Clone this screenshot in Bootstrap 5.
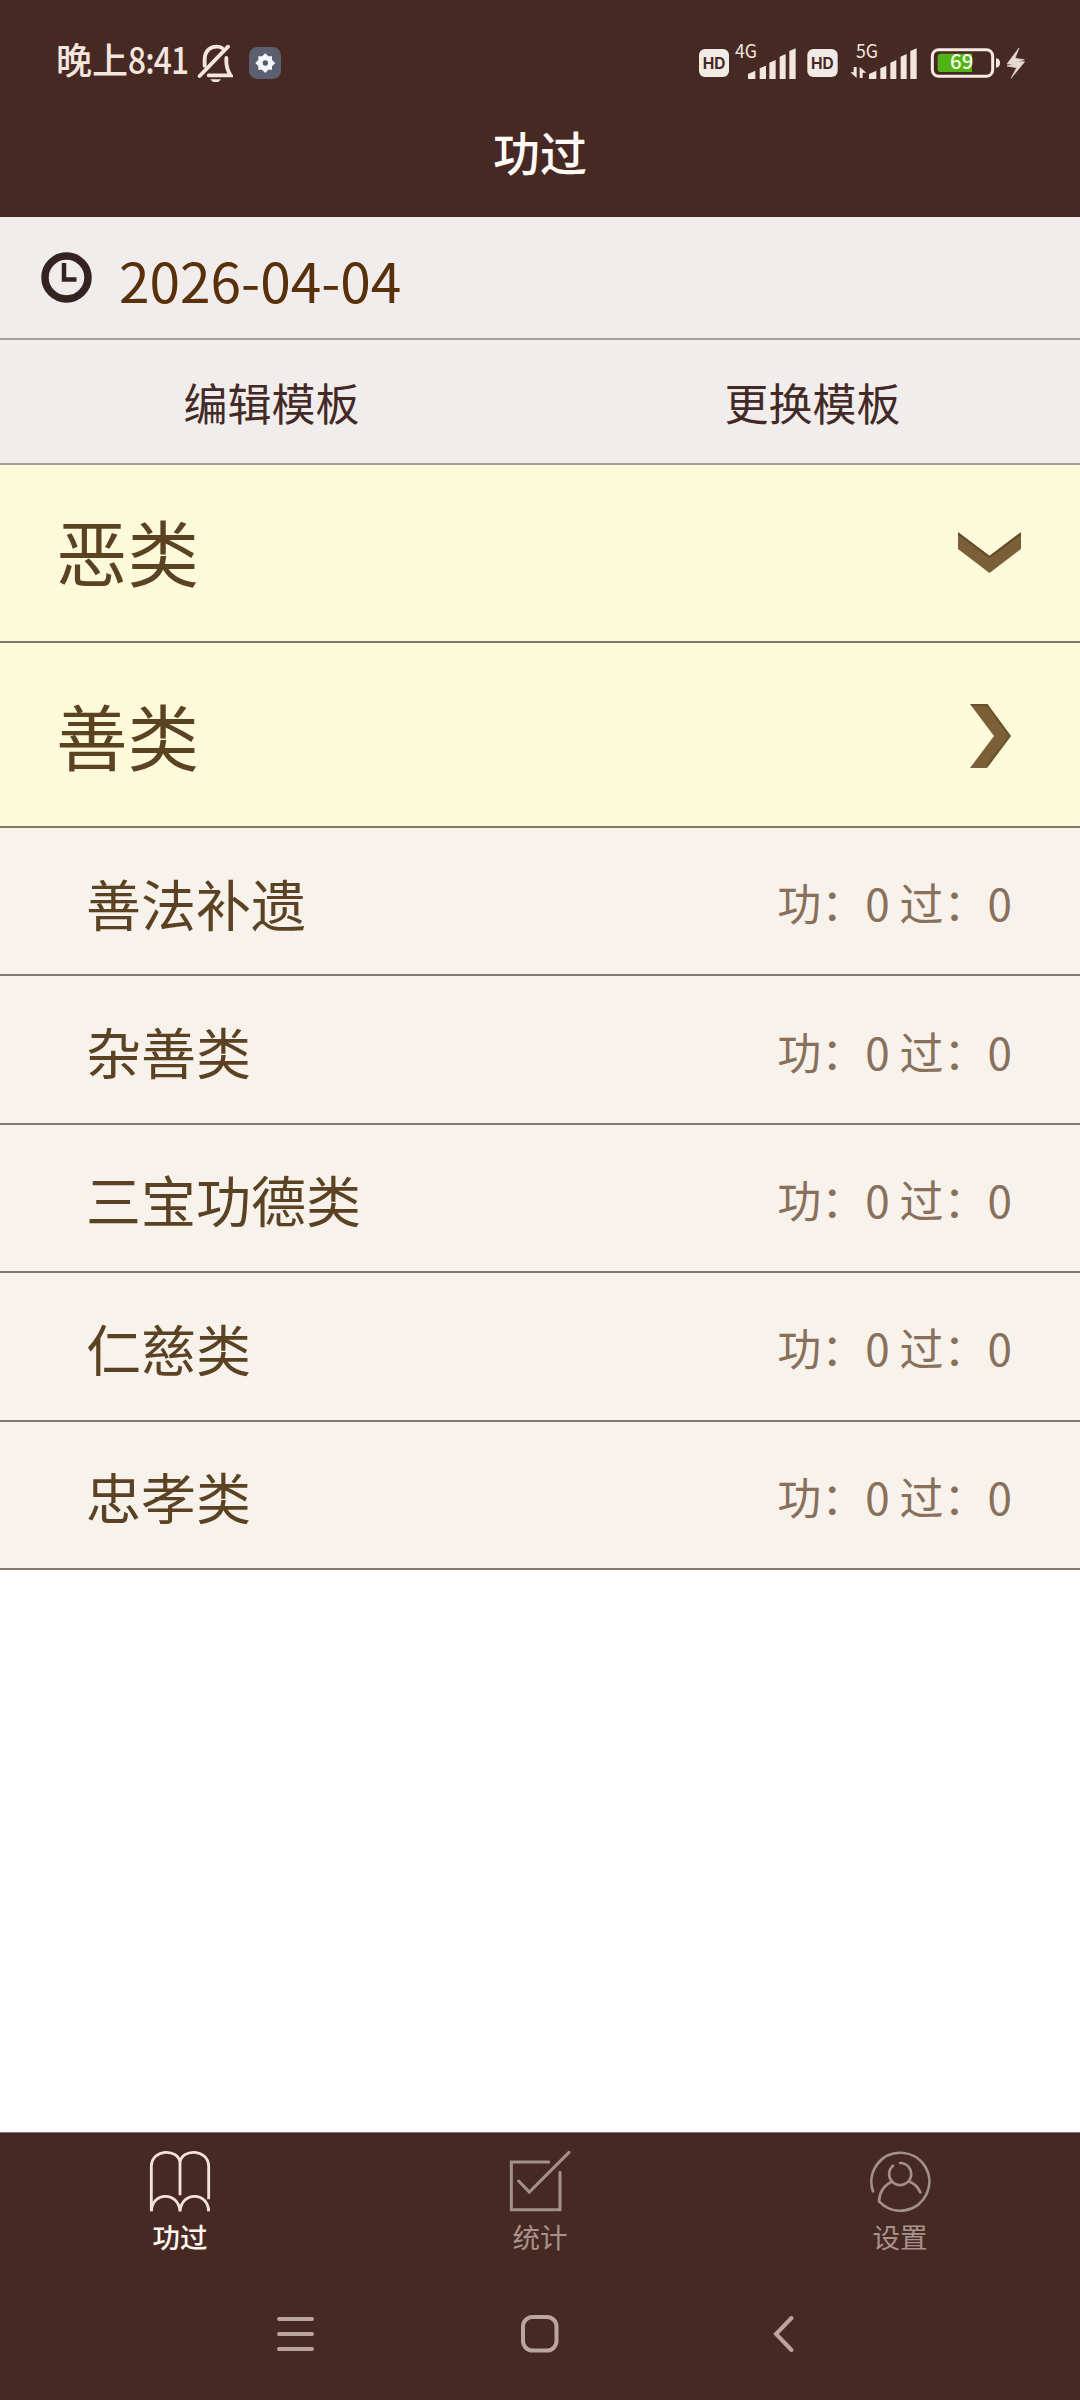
<!DOCTYPE html>
<html lang="zh-CN">
<head>
<meta charset="utf-8">
<meta name="viewport" content="width=device-width, initial-scale=1">
<title>功过</title>
<link href="https://cdn.jsdelivr.net/npm/bootstrap@5.3.0/dist/css/bootstrap.min.css" rel="stylesheet">
<style>
  body { font-family: "Noto Sans CJK SC", "Noto Sans", sans-serif; background: #fff; line-height: 1; }
  svg { display: block; flex: none; }
  .app-screen { height: 2400px; overflow: hidden; }
  .brand-bar { background: #472924; height: 217px; color: #fffaf6; }
  .status-line { height: 82px; padding: 22px 55px 0 56px; color: #f3e6df; }
  .status-clock { font-size: 36px; font-weight: 500; line-height: 36px; white-space: nowrap; width: 141px; padding-top: 18px; }
  .status-digits { display: inline-block; transform: scaleX(.88); transform-origin: left; letter-spacing: -1px; }
  .page-title { font-size: 47px; font-weight: 500; line-height: 60px; margin: 39px 0 0; }
  .tool-row { background: #f1edec; border-bottom: 2px solid #a39c9b; }
  .date-row { height: 123px; padding: 0 0 1px 41px; font-size: 55px; color: #5a300b; }
  .date-text { margin-left: 27px; padding-top: 4px; }
  .template-row { height: 125px; font-size: 44px; color: #442a26; padding: 0 0 0 2px; }
  .group-row { background: #fdf9db; border-bottom: 2px solid #807764; padding-left: 56px; font-size: 71.5px; color: #5b4322; }
  .group-row span { padding-bottom: 3px; }
  .group-evil { height: 178px; padding-right: 59px; padding-bottom: 1px; }
  .group-good { height: 185px; padding-right: 68px; padding-top: 3px; }
  .item-row { height: 148.4px; background: #f8f2ec; border-bottom: 2px solid #827873; padding: 2px 68px 0 86px; font-size: 55px; color: #5b4222; }
  .item-score { font-size: 44px; color: #88705b; white-space: pre; }
  .tab-footer { background: #472924; border-top: 1px solid #8b7773; height: 268px; }
  .tab-item { color: #a7938c; font-size: 27.5px; padding-top: 17px; font-weight: 400; }
  .tab-item.is-current { color: #fff6f0; font-weight: 500; }
  .tab-label { margin-top: 10px; line-height: 28px; }
  .system-nav { padding: 0 276px; margin-top: 64px; color: #bca59f; }
</style>
</head>
<body>
<div class="app-screen d-flex flex-column">
  <header class="brand-bar">
    <div class="status-line d-flex align-items-start">
      <div class="status-clock">晚上<span class="status-digits">8:41</span></div>
      <svg width="36" height="60" viewBox="591 66 108 180" fill="none" stroke="currentColor" stroke-width="11.500" stroke-linecap="round">
        <path d="M599 228L684 140M614 197V180C614 149 635 139 652 140Q660 140 666 144M679 174V188Q681 211 692 226H626"/>
        <path d="M631 238H663Q656 248 647 248T631 238Z" fill="currentColor" stroke="none"/>
      </svg>
      <svg style="margin-left:16px" width="32" height="60" viewBox="747 66 96 180">
        <rect x="747" y="141" width="96" height="96" rx="25" fill="#5b5f6f"/>
        <path d="M796 160L805 169H816V180L826 189L816 199V209H805L796 219L786 209H775V199L766 189L775 180V169H786Z" fill="#f5f6fb"/>
        <circle cx="796" cy="189" r="8" fill="#53596a"/>
      </svg>
      <svg class="ms-auto" width="30" height="60" viewBox="57 6 90 180">
        <rect x="57" y="87" width="90" height="84" rx="18" fill="#f2ebe5"/>
        <text x="102" y="147" text-anchor="middle" textLength="68" lengthAdjust="spacingAndGlyphs" font-family="Inter" font-weight="700" font-size="46" fill="#462823">HD</text>
      </svg>
      <svg style="margin-left:5px" width="63" height="60" viewBox="162 6 189 180" fill="currentColor">
        <text x="165" y="113" textLength="66" lengthAdjust="spacingAndGlyphs" font-family="Noto Sans CJK SC" font-size="55">4G</text>
        <path d="M204 162L226 152V177H204ZM239 145L258 137V177H239ZM268 128L287 120V177H268ZM299 110L317 102V177H299ZM328 93L347 85V177H328Z"/>
      </svg>
      <svg style="margin-left:10px" width="31" height="60" viewBox="382 6 93 180">
        <rect x="383" y="87" width="91" height="84" rx="18" fill="#f2ebe5"/>
        <text x="428" y="147" text-anchor="middle" textLength="68" lengthAdjust="spacingAndGlyphs" font-family="Inter" font-weight="700" font-size="46" fill="#462823">HD</text>
      </svg>
      <svg style="margin-left:12px" width="67" height="60" viewBox="510 6 201 180" fill="currentColor">
        <text x="528" y="113" textLength="66" lengthAdjust="spacingAndGlyphs" font-family="Noto Sans CJK SC" font-size="55">5G</text>
        <path d="M521 141H530V174L511 157H521ZM539 141L559 158H548V174H539Z"/>
        <path d="M567 162L589 152V177H567ZM601 145L619 137V177H601ZM631 128L649 120V177H631ZM662 110L680 102V177H662ZM691 93L710 85V177H691Z"/>
      </svg>
      <svg style="margin-left:13px" width="71" height="60" viewBox="750 6 213 180">
        <rect x="757" y="89" width="181" height="80" rx="19" fill="none" stroke="#f7ebe4" stroke-width="9"/>
        <path d="M948 115Q960 116 960 129T948 143Z" fill="#f7ebe4"/>
        <path d="M783 101H876V156H783Q773 156 773 146V111Q773 101 783 101Z" fill="#52b315"/>
        <text x="810" y="147" textLength="70" lengthAdjust="spacingAndGlyphs" font-family="Noto Sans CJK SC" font-weight="500" font-size="62" fill="#f5fbe9">69</text>
      </svg>
      <svg style="margin-left:5px" width="19" height="60" viewBox="979 6 57 180">
        <path d="M1018 84L982 132H1001L982 138L1011 143L994 175L1035 125H1014L1034 119L1006 115Z" fill="#e5d9d3" stroke="#e5d9d3" stroke-width="2"/>
      </svg>
    </div>
    <h1 class="page-title text-center">功过</h1>
  </header>

  <main class="flex-grow-1">
    <section class="tool-row date-row d-flex align-items-center">
      <svg width="51" height="51" viewBox="0 0 51 51" fill="none" stroke="#342321"><circle cx="25.5" cy="25.5" r="21.5" stroke-width="7.5"/><path d="M23 11V27.500H35.500" stroke-width="4.500"/></svg>
      <span class="date-text">2026-04-04</span>
    </section>
    <section class="tool-row template-row row g-0 align-items-center text-center">
      <div class="col-6">编辑模板</div>
      <div class="col-6 ps-1">更换模板</div>
    </section>
    <section class="group-row group-evil d-flex align-items-center justify-content-between">
      <span>恶类</span>
      <svg width="63" height="42" viewBox="0 0 64 42" preserveAspectRatio="none"><path d="M0 0L32 24L64 0V17L32 41L0 17Z" fill="#7b5f36"/><path d="M0 1.500L32 25L64 1.500" fill="none" stroke="#624c28" stroke-width="2"/></svg>
    </section>
    <section class="group-row group-good d-flex align-items-center justify-content-between">
      <span>善类</span>
      <svg width="42" height="64" viewBox="0 0 42 64"><path d="M0 0H17L41 32L17 64H0L24 32Z" fill="#7b5f36"/><path d="M1 1H17L39.500 32L17 62" fill="none" stroke="#69522b" stroke-width="2"/></svg>
    </section>
    <div class="item-row d-flex align-items-center justify-content-between"><span>善法补遗</span><span class="item-score">功：0 过：0</span></div>
    <div class="item-row d-flex align-items-center justify-content-between"><span>杂善类</span><span class="item-score">功：0 过：0</span></div>
    <div class="item-row d-flex align-items-center justify-content-between"><span>三宝功德类</span><span class="item-score">功：0 过：0</span></div>
    <div class="item-row d-flex align-items-center justify-content-between"><span>仁慈类</span><span class="item-score">功：0 过：0</span></div>
    <div class="item-row d-flex align-items-center justify-content-between"><span>忠孝类</span><span class="item-score">功：0 过：0</span></div>
  </main>

  <footer class="tab-footer">
    <nav class="row g-0 text-center">
      <a class="col-4 tab-item is-current text-decoration-none d-flex flex-column align-items-center" href="#">
        <svg width="62" height="62" viewBox="147 89 186 186" fill="none" stroke="#f4e2dc" stroke-width="8.500"><path d="M154 273V137C156 84 236 84 240 127C244 84 324 84 326 137V237M240 125V225M154 273C156 213 236 213 240 273C244 213 324 213 326 273"/></svg>
        <span class="tab-label">功过</span>
      </a>
      <a class="col-4 tab-item text-decoration-none d-flex flex-column align-items-center" href="#">
        <svg width="62" height="62" viewBox="207 89 186 186" fill="none" stroke="#a4908a" stroke-width="9" stroke-linecap="round"><path d="M326 125H214V268H360V156M236 182L268 215L387 96"/></svg>
        <span class="tab-label">统计</span>
      </a>
      <a class="col-4 tab-item text-decoration-none d-flex flex-column align-items-center" href="#">
        <svg width="62" height="62" viewBox="387 89 186 186" fill="none" stroke="#a4908a" stroke-width="8" stroke-linecap="round"><path d="M399 213A87 87 0 1 1 417 243Q419 202 455 184M506 183Q530 192 541 216M459 136A33 33 0 1 0 480 128"/></svg>
        <span class="tab-label">设置</span>
      </a>
    </nav>
    <div class="system-nav d-flex justify-content-between align-items-center">
      <svg width="39" height="40" viewBox="0 0 39 40" stroke="#b8a49c" stroke-width="4" stroke-linecap="round"><path d="M3 5H36M3 20H36M3 35H36"/></svg>
      <svg width="40" height="40" viewBox="0 0 40 40" fill="none" stroke="currentColor" stroke-width="4"><rect x="3" y="3" width="33.500" height="33.500" rx="9.500"/></svg>
      <svg width="39" height="40" viewBox="-8 0 39 40" fill="none" stroke="currentColor" stroke-width="4" stroke-linecap="round"><path d="M18.500 4L3 20L18.500 36"/></svg>
    </div>
  </footer>
</div>
<script src="https://cdn.jsdelivr.net/npm/bootstrap@5.3.0/dist/js/bootstrap.bundle.min.js"></script>
</body>
</html>
